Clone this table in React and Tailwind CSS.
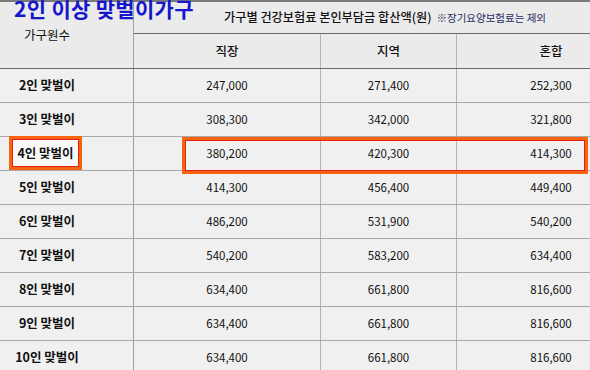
const rows = [
  { label: "2인 맞벌이", a: "247,000", b: "271,400", c: "252,300" },
  { label: "3인 맞벌이", a: "308,300", b: "342,000", c: "321,800" },
  { label: "4인 맞벌이", a: "380,200", b: "420,300", c: "414,300", mark: true },
  { label: "5인 맞벌이", a: "414,300", b: "456,400", c: "449,400" },
  { label: "6인 맞벌이", a: "486,200", b: "531,900", c: "540,200" },
  { label: "7인 맞벌이", a: "540,200", b: "583,200", c: "634,400" },
  { label: "8인 맞벌이", a: "634,400", b: "661,800", c: "816,600" },
  { label: "9인 맞벌이", a: "634,400", b: "661,800", c: "816,600" },
  { label: "10인 맞벌이", a: "634,400", b: "661,800", c: "816,600" },
];

function Row({ row }) {
  return (
    <div className="grid grid-cols-[134px_187px_136px_188px] h-[34px] border-b border-[#a8a8a8]">
      <div className="flex items-center justify-center pr-[39px] border-r border-[#a0a0a0]">
        {row.mark ? (
          <span className="flex items-center justify-center w-[73px] h-[34px] -mt-px mr-[3px] bg-[#f8f8f8] border-[3px] border-[#f7640f] shadow-[inset_0_0_0_1px_#e0201a] font-bold text-[12.5px] text-[#111]">
            {row.label}
          </span>
        ) : (
          <span className="font-bold text-[12.5px] text-[#111]">{row.label}</span>
        )}
      </div>
      <div className="flex items-center justify-center border-r border-[#b4b4b4] text-[11.5px]">{row.a}</div>
      <div className="flex items-center justify-center border-r border-[#b4b4b4] text-[11.5px]">{row.b}</div>
      <div className="flex items-center justify-center text-[11.5px]">{row.c}</div>
    </div>
  );
}

export default function App() {
  return (
    <div className="relative w-[590px] h-[370px] overflow-hidden bg-[#f0f0f0] text-[#111] font-['Noto_Sans_CJK_KR',sans-serif]">
      <div className="grid grid-cols-[134px_187px_136px_188px] grid-rows-[32px_34px] bg-[#ebebeb] border-t-2 border-[#7a7a7a] border-b border-b-[#6a6a6a]">
        <div className="row-span-2 flex items-center justify-center pr-[39px] border-r border-[#a0a0a0] text-[12.5px]">
          가구원수
        </div>
        <div className="col-span-3 flex items-center pl-[90px] border-b border-[#6a6a6a] whitespace-nowrap">
          <span className="text-[12.2px] font-medium">가구별 건강보험료 본인부담금 합산액(원)</span>
          <span className="ml-[5px] text-[10.5px] text-[#1e2a62]">※장기요양보험료는 제외</span>
        </div>
        <div className="flex items-center justify-center border-r border-[#b4b4b4] text-[12.5px] font-medium">직장</div>
        <div className="flex items-center justify-center border-r border-[#b4b4b4] text-[12.5px] font-medium">지역</div>
        <div className="flex items-center justify-center text-[12.5px] font-medium">혼합</div>
      </div>

      {rows.map((row) => (
        <Row key={row.label} row={row} />
      ))}

      <div className="absolute left-[14px] top-[-2px] text-[21px] leading-none font-semibold text-[#1616cc] whitespace-nowrap tracking-[0.3px]">
        2인 이상 맞벌이가구
      </div>

      <div className="absolute left-[182px] top-[137px] w-[406px] h-[37px] border-[3px] border-[#f7640f] shadow-[inset_0_0_0_1px_#e0201a]" />
    </div>
  );
}
